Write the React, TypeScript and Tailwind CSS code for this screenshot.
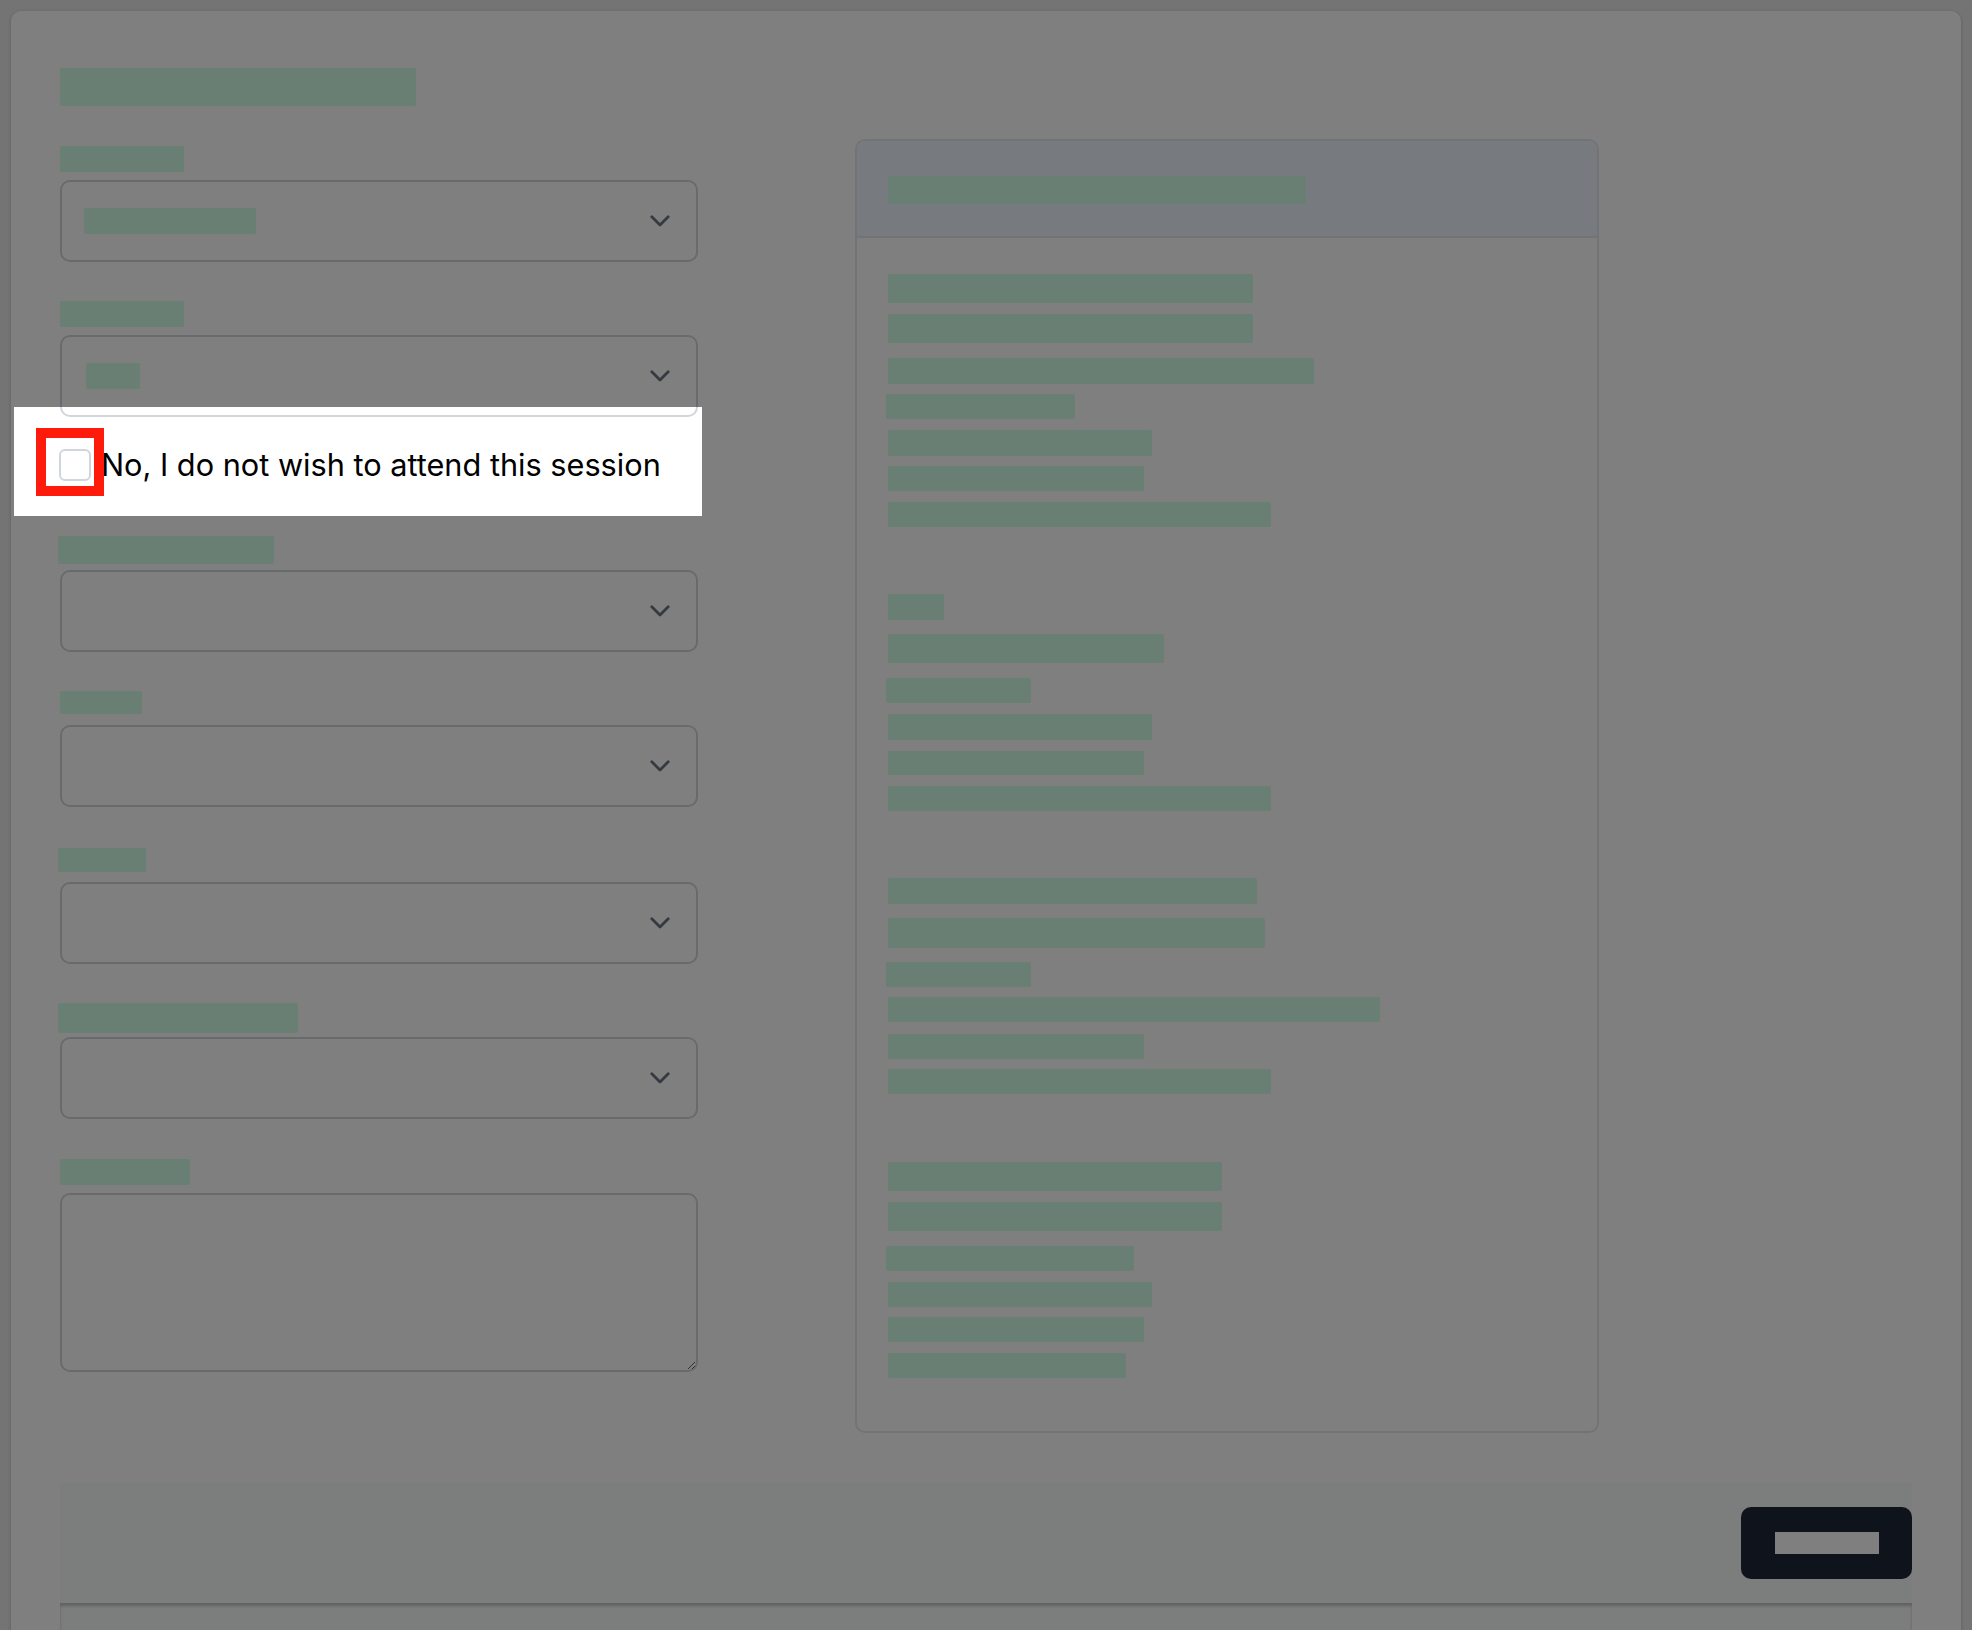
import { clsx } from "clsx"

// redacted text bars
const bar = "rounded-[2px] bg-[#d4fee6]"

const fields = [
  { wrap: "mt-[40px]", label: "w-[124px] h-[26px]", value: "w-[172px] h-[26px]" },
  { wrap: "mt-[39px]", label: "mt-[1px] w-[124px] h-[26px]", value: "ml-[2px] w-[54px] h-[26px]" },
]

const moreFields = [
  { wrap: "mt-[55px]", label: "-ml-[2px] w-[216px] h-[28px]" },
  { wrap: "mt-[39px]", label: "mt-[3px] w-[82px] h-[23px]" },
  { wrap: "mt-[41px]", label: "mt-[1px] -ml-[2px] w-[88px] h-[24px]" },
  { wrap: "mt-[39px]", label: "mt-[1px] -ml-[2px] w-[240px] h-[30px]" },
]

const summaryLines = [
  "w-[365px] h-[29px]",
  "mt-[11px] w-[365px] h-[29px]",
  "mt-[15px] w-[426px] h-[26px]",
  "mt-[10px] -ml-[2px] w-[189px] h-[25px]",
  "mt-[11px] w-[264px] h-[26px]",
  "mt-[10px] w-[256px] h-[25px]",
  "mt-[11px] w-[383px] h-[25px]",

  "mt-[67px] w-[56px] h-[26px]",
  "mt-[14px] w-[276px] h-[29px]",
  "mt-[15px] -ml-[2px] w-[145px] h-[25px]",
  "mt-[11px] w-[264px] h-[26px]",
  "mt-[11px] w-[256px] h-[24px]",
  "mt-[11px] w-[383px] h-[25px]",

  "mt-[67px] w-[369px] h-[26px]",
  "mt-[14px] w-[377px] h-[30px]",
  "mt-[14px] -ml-[2px] w-[145px] h-[25px]",
  "mt-[10px] w-[492px] h-[25px]",
  "mt-[12px] w-[256px] h-[25px]",
  "mt-[10px] w-[383px] h-[25px]",

  "mt-[68px] w-[334px] h-[29px]",
  "mt-[11px] w-[334px] h-[29px]",
  "mt-[15px] -ml-[2px] w-[248px] h-[25px]",
  "mt-[11px] w-[264px] h-[25px]",
  "mt-[10px] w-[256px] h-[25px]",
  "mt-[11px] w-[238px] h-[25px]",
]

function Chevron() {
  return (
    <svg width="20" height="12" viewBox="0 0 20 12" fill="none" className="shrink-0">
      <path d="M1.8 1.8 L10 10 L18.2 1.8" stroke="#6b7280" strokeWidth="2.8" strokeLinecap="round" strokeLinejoin="round" />
    </svg>
  )
}

function SelectBox({ value }: { value?: string }) {
  return (
    <div className="flex h-[82px] items-center justify-between rounded-[10px] border-2 border-gray-300 bg-white pl-[22px] pr-[26px]">
      {value ? <div className={clsx(bar, value)} /> : <div />}
      <Chevron />
    </div>
  )
}

function Label({ cls }: { cls: string }) {
  return (
    <div className="h-[34px]">
      <div className={clsx(bar, cls)} />
    </div>
  )
}

export default function App() {
  return (
    <div className="relative h-[1630px] overflow-hidden bg-[#e8e9e9] px-[11px] pt-[11px] font-['Inter',_'Noto_Sans',sans-serif]">
      <div className="h-[1700px] rounded-[10px] bg-white px-[49px] pt-[57px] shadow-[0_1px_4px_rgba(0,0,0,0.18)]">
        <div className="flex items-start gap-[157px]">
          {/* form column */}
          <div className="w-[638px]">
            <div className={clsx(bar, "h-[38px] w-[356px]")} />

            {fields.map((f, i) => (
              <div key={i} className={f.wrap}>
                <Label cls={f.label} />
                <SelectBox value={f.value} />
              </div>
            ))}

            <label className="mt-[32px] flex h-[32px] items-center gap-[10px] -ml-px">
              <input
                type="checkbox"
                className="h-[32px] w-[32px] shrink-0 appearance-none rounded-[6px] border-2 border-gray-300 bg-white"
              />
              <span className="pt-px text-[30.7px] leading-none text-black">No, I do not wish to attend this session</span>
            </label>

            {moreFields.map((f, i) => (
              <div key={i} className={f.wrap}>
                <Label cls={f.label} />
                <SelectBox />
              </div>
            ))}

            <div className="mt-[40px]">
              <Label cls="mt-[1px] w-[130px] h-[26px]" />
              <textarea className="block h-[179px] w-full rounded-[10px] border-2 border-gray-300 bg-white" />
            </div>
          </div>

          {/* summary panel */}
          <div className="mt-[71px] w-[744px] overflow-hidden rounded-[10px] border-2 border-gray-200">
            <div className="border-b-2 border-gray-200 bg-[#eef4ff] px-[31px] pt-[35px] pb-[32px]">
              <div className={clsx(bar, "h-[28px] w-[418px]")} />
            </div>
            <div className="flex flex-col items-start px-[31px] pt-[36px] pb-[53px]">
              {summaryLines.map((cls, i) => (
                <div key={i} className={clsx(bar, cls)} />
              ))}
            </div>
          </div>
        </div>

        <div className="mt-[50px] flex h-[120px] items-center justify-end bg-gray-50">
          <button className="flex h-[72px] w-[171px] items-center justify-center rounded-[10px] bg-gray-800">
            <span className="h-[22px] w-[104px] bg-white" />
          </button>
        </div>
        <div className="h-[40px] bg-gray-50 shadow-[inset_0_3px_3px_rgba(0,0,0,0.22)]" />
      </div>

      {/* spotlight around the highlighted checkbox row */}
      <div className="pointer-events-none absolute left-[14px] top-[407px] z-10 h-[109px] w-[688px] shadow-[0_0_0_4000px_rgba(0,0,0,0.5)]" />
      <div className="pointer-events-none absolute left-[36px] top-[428px] z-20 h-[68px] w-[68px] border-[10px] border-[#fe1b0b]" />
    </div>
  )
}
